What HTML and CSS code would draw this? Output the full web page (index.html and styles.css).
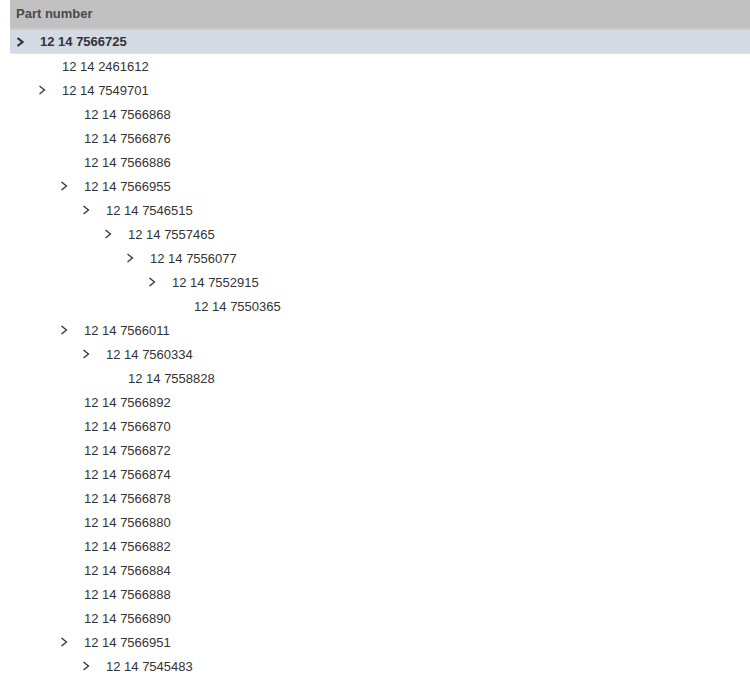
FILE: index.html
```html
<!DOCTYPE html>
<html lang="en">
<head>
    <meta charset="UTF-8">
    <title>Part tree</title>
    <link rel="stylesheet" href="styles.css">
</head>
<body>
    <div class="tree">
        <div class="tree-header">Part number</div>
        <ul class="nodes">
            <li>
                <div class="row selected"><span class="toggle"><svg viewBox="0 0 8 10"><polyline points="1.5,1 6.5,5 1.5,9"/></svg></span>12 14 7566725</div>
                <ul>
                    <li><div class="row"><span class="toggle"></span>12 14 2461612</div></li>
                    <li>
                        <div class="row"><span class="toggle"><svg viewBox="0 0 8 10"><polyline points="1.5,1 6.5,5 1.5,9"/></svg></span>12 14 7549701</div>
                        <ul>
                            <li><div class="row"><span class="toggle"></span>12 14 7566868</div></li>
                            <li><div class="row"><span class="toggle"></span>12 14 7566876</div></li>
                            <li><div class="row"><span class="toggle"></span>12 14 7566886</div></li>
                            <li>
                                <div class="row"><span class="toggle"><svg viewBox="0 0 8 10"><polyline points="1.5,1 6.5,5 1.5,9"/></svg></span>12 14 7566955</div>
                                <ul>
                                    <li>
                                        <div class="row"><span class="toggle"><svg viewBox="0 0 8 10"><polyline points="1.5,1 6.5,5 1.5,9"/></svg></span>12 14 7546515</div>
                                        <ul>
                                            <li>
                                                <div class="row"><span class="toggle"><svg viewBox="0 0 8 10"><polyline points="1.5,1 6.5,5 1.5,9"/></svg></span>12 14 7557465</div>
                                                <ul>
                                                    <li>
                                                        <div class="row"><span class="toggle"><svg viewBox="0 0 8 10"><polyline points="1.5,1 6.5,5 1.5,9"/></svg></span>12 14 7556077</div>
                                                        <ul>
                                                            <li>
                                                                <div class="row"><span class="toggle"><svg viewBox="0 0 8 10"><polyline points="1.5,1 6.5,5 1.5,9"/></svg></span>12 14 7552915</div>
                                                                <ul>
                                                                    <li><div class="row"><span class="toggle"></span>12 14 7550365</div></li>
                                                                </ul>
                                                            </li>
                                                        </ul>
                                                    </li>
                                                </ul>
                                            </li>
                                        </ul>
                                    </li>
                                </ul>
                            </li>
                            <li>
                                <div class="row"><span class="toggle"><svg viewBox="0 0 8 10"><polyline points="1.5,1 6.5,5 1.5,9"/></svg></span>12 14 7566011</div>
                                <ul>
                                    <li>
                                        <div class="row"><span class="toggle"><svg viewBox="0 0 8 10"><polyline points="1.5,1 6.5,5 1.5,9"/></svg></span>12 14 7560334</div>
                                        <ul>
                                            <li><div class="row"><span class="toggle"></span>12 14 7558828</div></li>
                                        </ul>
                                    </li>
                                </ul>
                            </li>
                            <li><div class="row"><span class="toggle"></span>12 14 7566892</div></li>
                            <li><div class="row"><span class="toggle"></span>12 14 7566870</div></li>
                            <li><div class="row"><span class="toggle"></span>12 14 7566872</div></li>
                            <li><div class="row"><span class="toggle"></span>12 14 7566874</div></li>
                            <li><div class="row"><span class="toggle"></span>12 14 7566878</div></li>
                            <li><div class="row"><span class="toggle"></span>12 14 7566880</div></li>
                            <li><div class="row"><span class="toggle"></span>12 14 7566882</div></li>
                            <li><div class="row"><span class="toggle"></span>12 14 7566884</div></li>
                            <li><div class="row"><span class="toggle"></span>12 14 7566888</div></li>
                            <li><div class="row"><span class="toggle"></span>12 14 7566890</div></li>
                            <li>
                                <div class="row"><span class="toggle"><svg viewBox="0 0 8 10"><polyline points="1.5,1 6.5,5 1.5,9"/></svg></span>12 14 7566951</div>
                                <ul>
                                    <li><div class="row"><span class="toggle"><svg viewBox="0 0 8 10"><polyline points="1.5,1 6.5,5 1.5,9"/></svg></span>12 14 7545483</div></li>
                                </ul>
                            </li>
                        </ul>
                    </li>
                </ul>
            </li>
        </ul>
    </div>
</body>
</html>
```

FILE: styles.css
```css
body {
    margin: 0;
    padding: 0;
    background-color: #fff;
    font-family: "Liberation Sans", Arial, sans-serif;
    font-size: 13px;
    color: #333;
    overflow: hidden;
}

.tree {
    margin-left: 10px;
}

.tree-header {
    height: 28px;
    line-height: 27px;
    padding-left: 6px;
    background-color: #c1c1c1;
    border-bottom: 2px solid #cbcbcb;
    font-weight: bold;
    color: #4a4a4a;
}

.nodes, .nodes ul {
    list-style-type: none;
    margin: 0;
    padding: 0;
}

.nodes ul {
    padding-left: 22px;
}

.row {
    display: flex;
    align-items: center;
    height: 24px;
    padding-left: 6px;
    white-space: nowrap;
}

.row.selected {
    height: 23px;
    background-color: #d3dae4;
    border-bottom: 1px solid #dde2ea;
    font-weight: bold;
}

.toggle {
    display: flex;
    align-items: center;
    width: 24px;
    flex-shrink: 0;
}

.toggle svg {
    width: 8px;
    height: 10px;
    fill: none;
    stroke: #333;
    stroke-width: 1.3;
}

.selected .toggle svg {
    stroke-width: 2.2;
}
```
